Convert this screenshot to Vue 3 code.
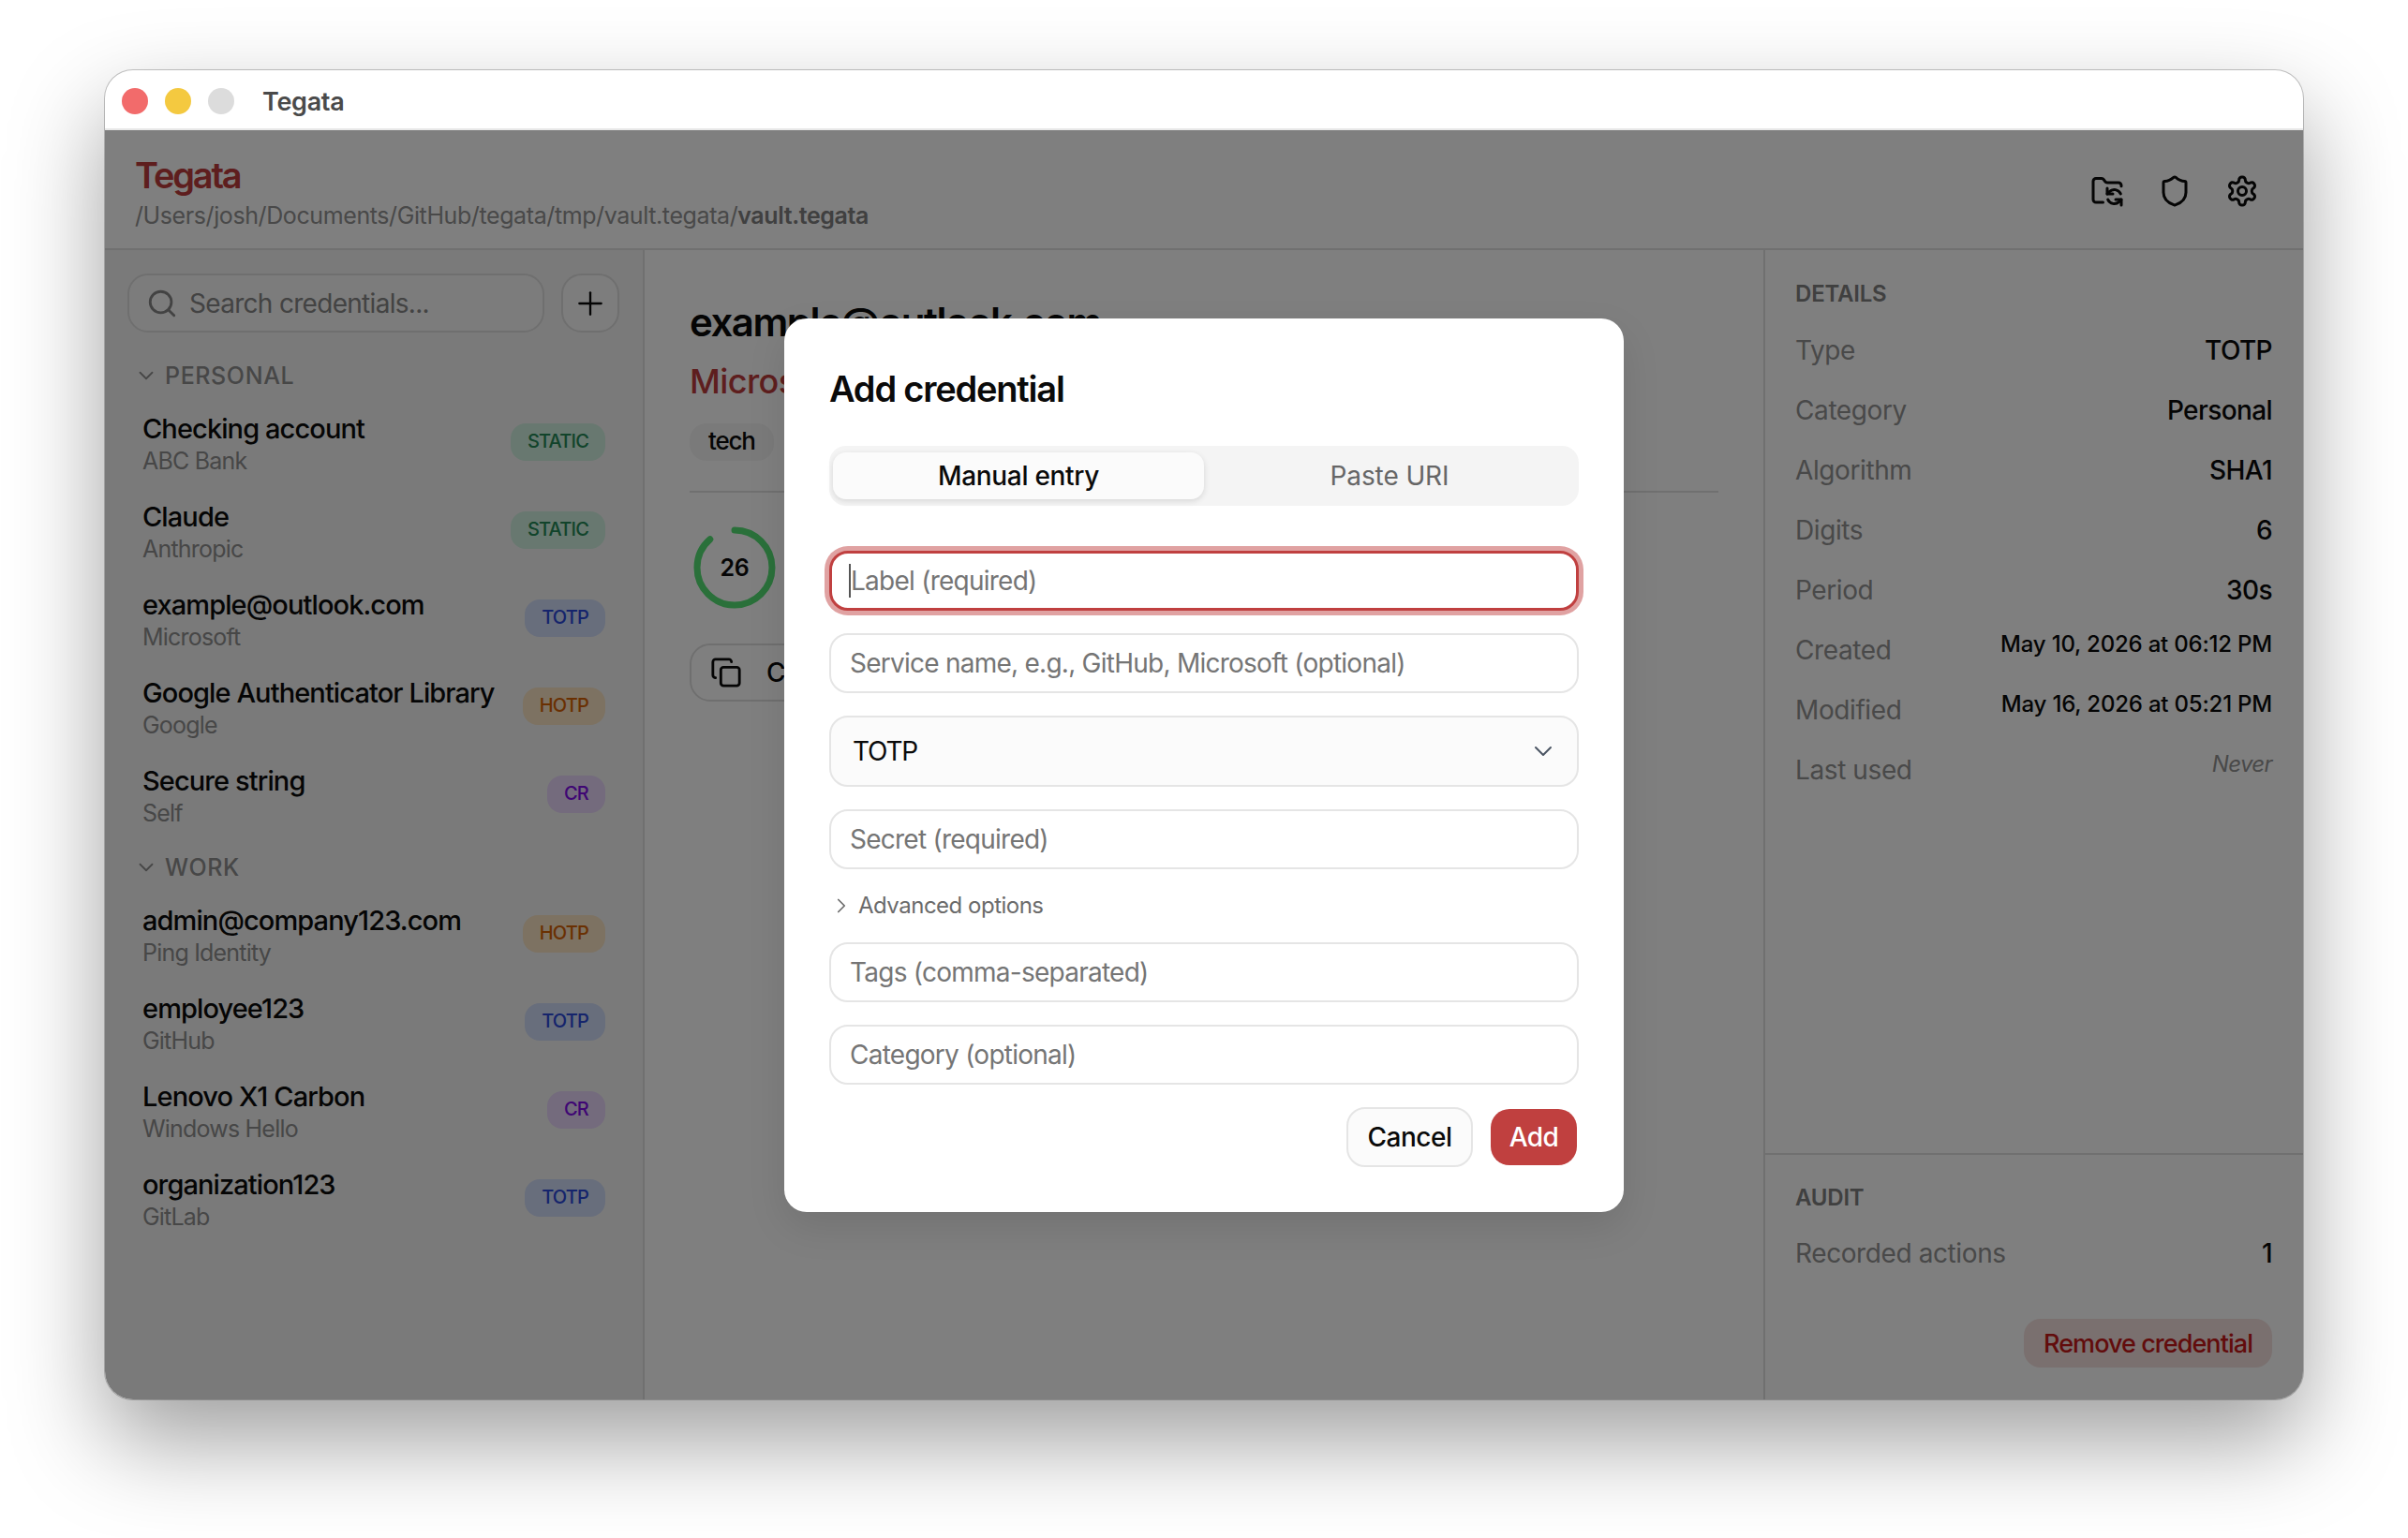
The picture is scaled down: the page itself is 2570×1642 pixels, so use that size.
<script setup>
const sections = [
  {
    title: 'PERSONAL',
    items: [
      { name: 'Checking account', sub: 'ABC Bank', kind: 'STATIC' },
      { name: 'Claude', sub: 'Anthropic', kind: 'STATIC' },
      { name: 'example@outlook.com', sub: 'Microsoft', kind: 'TOTP' },
      { name: 'Google Authenticator Library', sub: 'Google', kind: 'HOTP' },
      { name: 'Secure string', sub: 'Self', kind: 'CR' },
    ],
  },
  {
    title: 'WORK',
    items: [
      { name: 'admin@company123.com', sub: 'Ping Identity', kind: 'HOTP' },
      { name: 'employee123', sub: 'GitHub', kind: 'TOTP' },
      { name: 'Lenovo X1 Carbon', sub: 'Windows Hello', kind: 'CR' },
      { name: 'organization123', sub: 'GitLab', kind: 'TOTP' },
    ],
  },
];

const details = [
  { label: 'Type', value: 'TOTP' },
  { label: 'Category', value: 'Personal' },
  { label: 'Algorithm', value: 'SHA1' },
  { label: 'Digits', value: '6' },
  { label: 'Period', value: '30s' },
  { label: 'Created', value: 'May 10, 2026 at 06:12 PM', small: true },
  { label: 'Modified', value: 'May 16, 2026 at 05:21 PM', small: true },
  { label: 'Last used', value: 'Never', never: true },
];

const ringLength = 2 * Math.PI * 40;
const ringDash = ringLength * 0.885;
</script>

<template>
  <div class="page">
    <div class="window">
      <div class="titlebar">
        <span class="light light--red"></span>
        <span class="light light--yellow"></span>
        <span class="light light--grey"></span>
        <span class="titlebar-name">Tegata</span>
      </div>

      <div class="app">
        <header class="header">
          <div>
            <div class="brand">Tegata</div>
            <div class="path">/Users/josh/Documents/GitHub/tegata/tmp/vault.tegata/<b>vault.tegata</b></div>
          </div>
          <div class="header-icons">
            <svg class="icon" viewBox="0 0 24 24">
              <path d="M9 20H4a2 2 0 0 1-2-2V5a2 2 0 0 1 2-2h3.9a2 2 0 0 1 1.69.9l.81 1.2a2 2 0 0 0 1.67.9H20a2 2 0 0 1 2 2v.5" />
              <path d="M12 10v4h4" />
              <path d="m12 14 1.535-1.605a5 5 0 0 1 8 1.5" />
              <path d="M22 22v-4h-4" />
              <path d="m22 18-1.535 1.605a5 5 0 0 1-8-1.5" />
            </svg>
            <svg class="icon" viewBox="0 0 24 24">
              <path d="M20 13c0 5-3.5 7.5-7.66 8.95a1 1 0 0 1-.67-.01C7.5 20.5 4 18 4 13V6a1 1 0 0 1 1-1c2 0 4.5-1.2 6.24-2.72a1.17 1.17 0 0 1 1.52 0C14.51 3.81 17 5 19 5a1 1 0 0 1 1 1z" />
            </svg>
            <svg class="icon" viewBox="0 0 24 24">
              <path d="M12.22 2h-.44a2 2 0 0 0-2 2v.18a2 2 0 0 1-1 1.73l-.43.25a2 2 0 0 1-2 0l-.15-.08a2 2 0 0 0-2.73.73l-.22.38a2 2 0 0 0 .73 2.73l.15.1a2 2 0 0 1 1 1.72v.51a2 2 0 0 1-1 1.74l-.15.09a2 2 0 0 0-.73 2.73l.22.38a2 2 0 0 0 2.73.73l.15-.08a2 2 0 0 1 2 0l.43.25a2 2 0 0 1 1 1.73V20a2 2 0 0 0 2 2h.44a2 2 0 0 0 2-2v-.18a2 2 0 0 1 1-1.73l.43-.25a2 2 0 0 1 2 0l.15.08a2 2 0 0 0 2.73-.73l.22-.39a2 2 0 0 0-.73-2.73l-.15-.08a2 2 0 0 1-1-1.74v-.5a2 2 0 0 1 1-1.74l.15-.09a2 2 0 0 0 .73-2.73l-.22-.38a2 2 0 0 0-2.73-.73l-.15.08a2 2 0 0 1-2 0l-.43-.25a2 2 0 0 1-1-1.73V4a2 2 0 0 0-2-2z" />
              <circle cx="12" cy="12" r="3" />
            </svg>
          </div>
        </header>

        <div class="columns">
          <aside class="sidebar">
            <div class="search-row">
              <div class="search">
                <svg class="icon icon--search" viewBox="0 0 24 24">
                  <circle cx="11" cy="11" r="8" />
                  <path d="m21 21-4.3-4.3" />
                </svg>
                <span>Search credentials...</span>
              </div>
              <button type="button" class="plus">
                <svg class="icon icon--plus" viewBox="0 0 24 24">
                  <path d="M5 12h14" />
                  <path d="M12 5v14" />
                </svg>
              </button>
            </div>

            <section v-for="section in sections" :key="section.title">
              <div class="section-title">
                <svg class="icon icon--section" viewBox="0 0 24 24">
                  <path d="m6 9 6 6 6-6" />
                </svg>
                {{ section.title }}
              </div>
              <div v-for="item in section.items" :key="item.name" class="row">
                <div>
                  <div class="row-name">{{ item.name }}</div>
                  <div class="row-sub">{{ item.sub }}</div>
                </div>
                <span :class="['badge', 'badge--' + item.kind.toLowerCase()]">{{ item.kind }}</span>
              </div>
            </section>
          </aside>

          <main class="main">
            <h1 class="main-title">example@outlook.com</h1>
            <div class="main-service">Microsoft</div>
            <div class="tags"><span class="tag">tech</span></div>
            <div class="divider"></div>
            <div class="ring">
              <svg width="90" height="90" viewBox="0 0 90 90">
                <circle
                  cx="45"
                  cy="45"
                  r="40"
                  fill="none"
                  stroke="#54e074"
                  stroke-width="7"
                  stroke-linecap="round"
                  :stroke-dasharray="ringDash + ' ' + ringLength"
                  transform="rotate(-90 45 45)" />
              </svg>
              <span class="ring-count">26</span>
            </div>
            <button type="button" class="copy">
              <svg class="icon icon--copy" viewBox="0 0 24 24">
                <rect x="8" y="8" width="14" height="14" rx="2" />
                <path d="M4 16c-1.1 0-2-.9-2-2V4c0-1.1.9-2 2-2h10c1.1 0 2 .9 2 2" />
              </svg>
              Copy code
            </button>
          </main>

          <aside class="details">
            <div class="details-top">
              <div class="panel-title">DETAILS</div>
              <div v-for="row in details" :key="row.label" class="detail-row">
                <span class="detail-label">{{ row.label }}</span>
                <span :class="['detail-value', row.small && 'detail-value--small', row.never && 'detail-value--never']">{{ row.value }}</span>
              </div>
            </div>
            <div class="audit">
              <div class="panel-title">AUDIT</div>
              <div class="detail-row">
                <span class="detail-label">Recorded actions</span>
                <span class="detail-value">1</span>
              </div>
              <div class="remove-row">
                <button type="button" class="remove">Remove credential</button>
              </div>
            </div>
          </aside>
        </div>

        <div class="overlay">
          <div class="modal">
            <h2 class="modal-title">Add credential</h2>
            <div class="tabs">
              <button type="button" class="tab tab--active">Manual entry</button>
              <button type="button" class="tab">Paste URI</button>
            </div>
            <div class="fields">
              <div class="field-focus">
                <input class="input input--focus" placeholder="Label (required)" />
                <span class="caret"></span>
              </div>
              <input class="input" placeholder="Service name, e.g., GitHub, Microsoft (optional)" />
              <div class="select">
                TOTP
                <svg class="icon icon--select" viewBox="0 0 24 24">
                  <path d="m6 9 6 6 6-6" />
                </svg>
              </div>
              <input class="input" placeholder="Secret (required)" />
              <div class="advanced">
                <svg class="icon icon--advanced" viewBox="0 0 24 24">
                  <path d="m9 18 6-6-6-6" />
                </svg>
                Advanced options
              </div>
              <input class="input" placeholder="Tags (comma-separated)" />
              <input class="input" placeholder="Category (optional)" />
            </div>
            <div class="actions">
              <button type="button" class="btn btn--cancel">Cancel</button>
              <button type="button" class="btn btn--add">Add</button>
            </div>
          </div>
        </div>
      </div>
    </div>
  </div>
</template>

<style>
html,
body {
  background: #fff;
}
</style>

<style scoped>
.page {
  width: 2570px;
  height: 1642px;
  padding: 75px 0 0 112px;
  box-sizing: border-box;
  overflow: hidden;
  font-family: Inter, "Liberation Sans", sans-serif;
  color: #0a0a0a;
}

.window {
  width: 2346px;
  height: 1419px;
  border-radius: 30px;
  overflow: hidden;
  display: flex;
  flex-direction: column;
  background: #fff;
  box-shadow: 0 0 0 1px rgba(0, 0, 0, 0.22), 0 44px 100px rgba(0, 0, 0, 0.38);
}

.titlebar {
  height: 64px;
  flex: none;
  box-sizing: border-box;
  display: flex;
  align-items: center;
  padding: 4px 0 0 18px;
  border-bottom: 2px solid #e8e8e8;
}

.light {
  width: 28px;
  height: 28px;
  border-radius: 50%;
  margin-right: 18px;
}

.light--red {
  background: #f26b6b;
}

.light--yellow {
  background: #f4c940;
}

.light--grey {
  background: #dcdcdc;
}

.titlebar-name {
  margin-left: 12px;
  font-size: 27px;
  font-weight: 600;
  color: #4a4a4a;
  letter-spacing: -0.3px;
}

.app {
  flex: 1;
  min-height: 0;
  position: relative;
  display: flex;
  flex-direction: column;
}

.header {
  height: 128px;
  flex: none;
  box-sizing: border-box;
  border-bottom: 2px solid #e0e0e0;
  padding: 25px 47px 0 32px;
  display: flex;
  justify-content: space-between;
}

.brand {
  font-size: 38px;
  line-height: 46px;
  font-weight: 600;
  color: #bc3c3c;
  letter-spacing: -2.2px;
}

.path {
  margin-top: 2px;
  font-size: 25px;
  line-height: 36px;
  color: #929292;
  letter-spacing: -0.4px;
}

.path b {
  font-weight: 600;
  color: #808080;
}

.icon {
  fill: none;
  stroke: currentColor;
  stroke-width: 2;
  stroke-linecap: round;
  stroke-linejoin: round;
  display: block;
  flex: none;
}

.header-icons {
  display: flex;
  gap: 36px;
  padding-top: 22px;
}

.header-icons .icon {
  width: 36px;
  height: 36px;
}

.columns {
  flex: 1;
  min-height: 0;
  display: flex;
}

.sidebar {
  width: 576px;
  flex: none;
  box-sizing: border-box;
  background: #f5f5f5;
  border-right: 2px solid #e0e0e0;
  padding: 25px 25px 0 24px;
}

.search-row {
  display: flex;
  gap: 18px;
  margin-bottom: 18px;
}

.search {
  flex: 1;
  height: 63px;
  box-sizing: border-box;
  border: 2px solid #dedede;
  background: #f9f9f9;
  border-radius: 22px;
  display: flex;
  align-items: center;
  gap: 12px;
  padding-left: 18px;
  font-size: 28px;
  color: #868686;
  letter-spacing: -0.7px;
}

.icon--search {
  width: 34px;
  height: 34px;
}

.plus {
  width: 62px;
  height: 63px;
  box-sizing: border-box;
  border: 2px solid #dedede;
  background: #fafafa;
  border-radius: 22px;
  padding: 0;
  display: flex;
  align-items: center;
  justify-content: center;
  color: #0a0a0a;
}

.icon--plus {
  width: 40px;
  height: 40px;
  stroke-width: 1.4;
}

.section-title {
  display: flex;
  align-items: center;
  gap: 7px;
  height: 36px;
  padding: 10px 0 9px 7px;
  font-size: 25px;
  font-weight: 500;
  letter-spacing: 0.6px;
  color: #8e8e8e;
}

.icon--section {
  width: 26px;
  height: 26px;
  stroke-width: 1.7;
}

.row {
  height: 94px;
  box-sizing: border-box;
  padding: 12px 15px 0 16px;
  display: flex;
  justify-content: space-between;
  gap: 16px;
}

.row-name {
  font-size: 29px;
  line-height: 36px;
  font-weight: 500;
  letter-spacing: -0.9px;
  white-space: nowrap;
}

.row-sub {
  font-size: 25px;
  line-height: 32px;
  color: #8e8e8e;
  letter-spacing: -0.8px;
}

.badge {
  flex: none;
  align-self: flex-start;
  margin-top: 12px;
  height: 40px;
  box-sizing: border-box;
  padding: 0 18px;
  border-radius: 16px;
  font-size: 20px;
  line-height: 39px;
  font-weight: 500;
  letter-spacing: -0.8px;
}

.badge--static {
  background: #d0f0e0;
  color: #248856;
}

.badge--totp {
  background: #d0dcf8;
  color: #2a48d8;
}

.badge--hotp {
  background: #fae4c4;
  color: #d46004;
}

.badge--cr {
  background: #e8d6fa;
  color: #7e0ce8;
}

.main {
  flex: 1;
  min-width: 0;
  padding: 49px 48px 0;
}

.main-title {
  margin: 0;
  font-size: 42px;
  line-height: 56px;
  font-weight: 600;
  letter-spacing: -1.5px;
  white-space: nowrap;
}

.main-service {
  margin-top: 11px;
  font-size: 36px;
  line-height: 48px;
  font-weight: 500;
  color: #bc3c3c;
  letter-spacing: -0.6px;
}

.tags {
  margin-top: 21px;
  display: flex;
}

.tag {
  height: 40px;
  padding: 0 20px;
  background: #f5f5f5;
  border-radius: 18px;
  font-size: 26px;
  line-height: 38px;
  font-weight: 500;
  letter-spacing: -1.2px;
}

.divider {
  margin-top: 32px;
  height: 2px;
  background: #e0e0e0;
}

.ring {
  position: relative;
  margin: 35px 0 36px 3px;
  width: 90px;
  height: 90px;
  display: flex;
  align-items: center;
  justify-content: center;
}

.ring svg {
  position: absolute;
  inset: 0;
}

.ring-count {
  font-size: 25px;
  font-weight: 600;
  letter-spacing: -0.4px;
}

.copy {
  height: 62px;
  width: 320px;
  box-sizing: border-box;
  border: 2px solid #dedede;
  background: #fff;
  border-radius: 22px;
  display: flex;
  align-items: center;
  gap: 26px;
  padding: 0 20px;
  font: 500 28px Inter, "Liberation Sans", sans-serif;
  color: #0a0a0a;
}

.icon--copy {
  width: 34px;
  height: 34px;
}

.details {
  width: 576px;
  flex: none;
  box-sizing: border-box;
  border-left: 2px solid #e0e0e0;
  display: flex;
  flex-direction: column;
}

.details-top {
  flex: 1;
  padding: 31px 33px 0 32px;
}

.panel-title {
  font-size: 24px;
  line-height: 32px;
  font-weight: 600;
  color: #808080;
  margin-bottom: 24px;
  letter-spacing: -0.2px;
}

.detail-row {
  height: 40px;
  margin-bottom: 24px;
  display: flex;
  justify-content: space-between;
  align-items: flex-start;
  font-size: 28px;
  line-height: 40px;
}

.detail-label {
  color: #929292;
  letter-spacing: -0.4px;
}

.detail-value {
  font-weight: 500;
  letter-spacing: -0.6px;
}

.detail-value--small {
  font-size: 24px;
  line-height: 28px;
  letter-spacing: -0.2px;
}

.detail-value--never {
  font-size: 24px;
  line-height: 28px;
  font-style: italic;
  font-weight: 400;
  color: #929292;
}

.audit {
  flex: none;
  border-top: 2px solid #e0e0e0;
  padding: 30px 33px 34px 32px;
}

.audit .panel-title {
  margin-bottom: 23px;
}

.audit .detail-row {
  margin-bottom: 50px;
}

.remove-row {
  display: flex;
  justify-content: flex-end;
}

.remove {
  height: 52px;
  padding: 0 21px;
  border: none;
  border-radius: 18px;
  background: #f4e0de;
  color: #c41818;
  font: 500 27px Inter, "Liberation Sans", sans-serif;
  letter-spacing: -0.95px;
}

.overlay {
  position: absolute;
  inset: 0;
  background: rgba(0, 0, 0, 0.5);
  display: flex;
  align-items: center;
  justify-content: center;
}

.modal {
  width: 896px;
  box-sizing: border-box;
  padding: 48px;
  background: #fff;
  border-radius: 24px;
  box-shadow: 0 16px 40px rgba(0, 0, 0, 0.1);
}

.modal-title {
  margin: 0 0 34px;
  font-size: 38px;
  line-height: 54px;
  font-weight: 600;
  letter-spacing: -1.2px;
}

.tabs {
  height: 64px;
  box-sizing: border-box;
  padding: 7px 4px;
  background: #f4f4f4;
  border-radius: 18px;
  display: grid;
  grid-template-columns: 1fr 1fr;
  margin-bottom: 48px;
}

.tab {
  border: none;
  background: none;
  border-radius: 14px;
  font: 400 28px Inter, "Liberation Sans", sans-serif;
  color: #666;
  letter-spacing: -0.1px;
  padding: 0;
}

.tab--active {
  background: #fbfbfb;
  color: #0a0a0a;
  font-weight: 500;
  letter-spacing: -0.3px;
  box-shadow: 0 2px 6px rgba(0, 0, 0, 0.12);
}

.fields {
  display: flex;
  flex-direction: column;
  gap: 24px;
}

.input {
  width: 100%;
  height: 64px;
  box-sizing: border-box;
  border: 2px solid #e5e5e5;
  border-radius: 20px;
  background: #fff;
  padding: 0 20px;
  font: 400 28px Inter, "Liberation Sans", sans-serif;
  letter-spacing: -0.75px;
  outline: none;
}

.input::placeholder {
  color: #757575;
  opacity: 1;
}

.field-focus {
  position: relative;
  display: flex;
}

.input--focus {
  border: 3px solid #c04040;
  box-shadow: 0 0 0 5px #e0a2a2;
}

.caret {
  position: absolute;
  left: 21px;
  top: 14px;
  width: 2px;
  height: 36px;
  background: #555;
}

.select {
  height: 76px;
  box-sizing: border-box;
  border: 2px solid #e5e5e5;
  border-radius: 20px;
  background: #fbfbfb;
  padding: 0 20px 0 23px;
  display: flex;
  align-items: center;
  justify-content: space-between;
  font-size: 28px;
  letter-spacing: -1.2px;
}

.icon--select {
  width: 32px;
  height: 32px;
  stroke-width: 1.5;
  color: #4b5563;
}

.advanced {
  height: 30px;
  display: flex;
  align-items: center;
  gap: 5px;
  font-size: 24px;
  color: #6b6b6b;
  letter-spacing: -0.5px;
}

.icon--advanced {
  width: 26px;
  height: 26px;
  stroke-width: 1.6;
}

.actions {
  margin-top: 24px;
  display: flex;
  justify-content: flex-end;
  align-items: center;
  gap: 19px;
  padding-right: 2px;
}

.btn {
  font: 500 28px Inter, "Liberation Sans", sans-serif;
  letter-spacing: -0.5px;
  border-radius: 20px;
  padding: 0;
}

.btn--cancel {
  width: 135px;
  height: 64px;
  border: 2px solid #e5e5e5;
  background: #fbfbfb;
  color: #0a0a0a;
}

.btn--add {
  width: 92px;
  height: 60px;
  border: none;
  background: #c0403f;
  color: #fff;
}
</style>
